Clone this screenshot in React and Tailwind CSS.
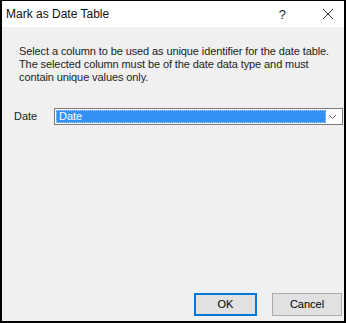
import React from 'react';

const App = () => {
    return (
        <div
            className="w-[346px] h-[323px] bg-[#f0f0f0] border-l-2 border-r-2 border-t border-b-2 border-black flex flex-col text-black"
            style={{ fontFamily: '"Liberation Sans", Arial, sans-serif' }}
        >
            {/* title bar */}
            <div className="h-[26px] bg-white flex items-center pl-[4px] shrink-0">
                <span className="text-[12px] leading-none text-[#111]">Mark as Date Table</span>
                <span className="ml-auto text-[13px] leading-none mr-[36px] text-[#222]">?</span>
                <svg width="12" height="12" viewBox="0 0 12 12" className="mr-[10px]">
                    <path d="M1 1 L11 11 M11 1 L1 11" stroke="#333" strokeWidth="1" fill="none" />
                </svg>
            </div>

            {/* body */}
            <div className="flex-1 flex flex-col">
                <p className="mt-[18px] ml-[17px] text-[11px] leading-[13px] text-[#222] whitespace-nowrap tracking-[-0.1px]">
                    Select a column to be used as unique identifier for the date table.
                    <br />
                    The selected column must be of the date data type and must
                    <br />
                    contain unique values only.
                </p>

                <div className="mt-[24px] flex items-center">
                    <span className="ml-[12px] w-[40px] text-[11px] leading-none text-[#222]">Date</span>
                    <div className="h-[17px] flex-1 mr-[1px] bg-white border border-[#7a7a7a] flex items-center p-[1px]">
                        <div className="h-full w-[270px] bg-[#3391f5] border border-dotted border-[#a9cdf7] flex items-center pl-[2px]">
                            <span className="text-[11px] leading-none text-white">Date</span>
                        </div>
                        <svg width="9" height="6" viewBox="0 0 9 6" className="ml-auto mr-[4px]">
                            <path d="M1 1 L4.5 4.5 L8 1" stroke="#666" strokeWidth="1" fill="none" />
                        </svg>
                    </div>
                </div>

                <div className="mt-auto mb-[5px] flex justify-end gap-[15px] mr-[2px]">
                    <button className="w-[63px] h-[23px] bg-[#e1e1e1] border-2 border-[#0078d7] text-[11px] leading-none text-black">
                        OK
                    </button>
                    <button className="w-[70px] h-[23px] bg-[#e1e1e1] border border-[#adadad] text-[11px] leading-none text-black">
                        Cancel
                    </button>
                </div>
            </div>
        </div>
    );
};

export default App;
